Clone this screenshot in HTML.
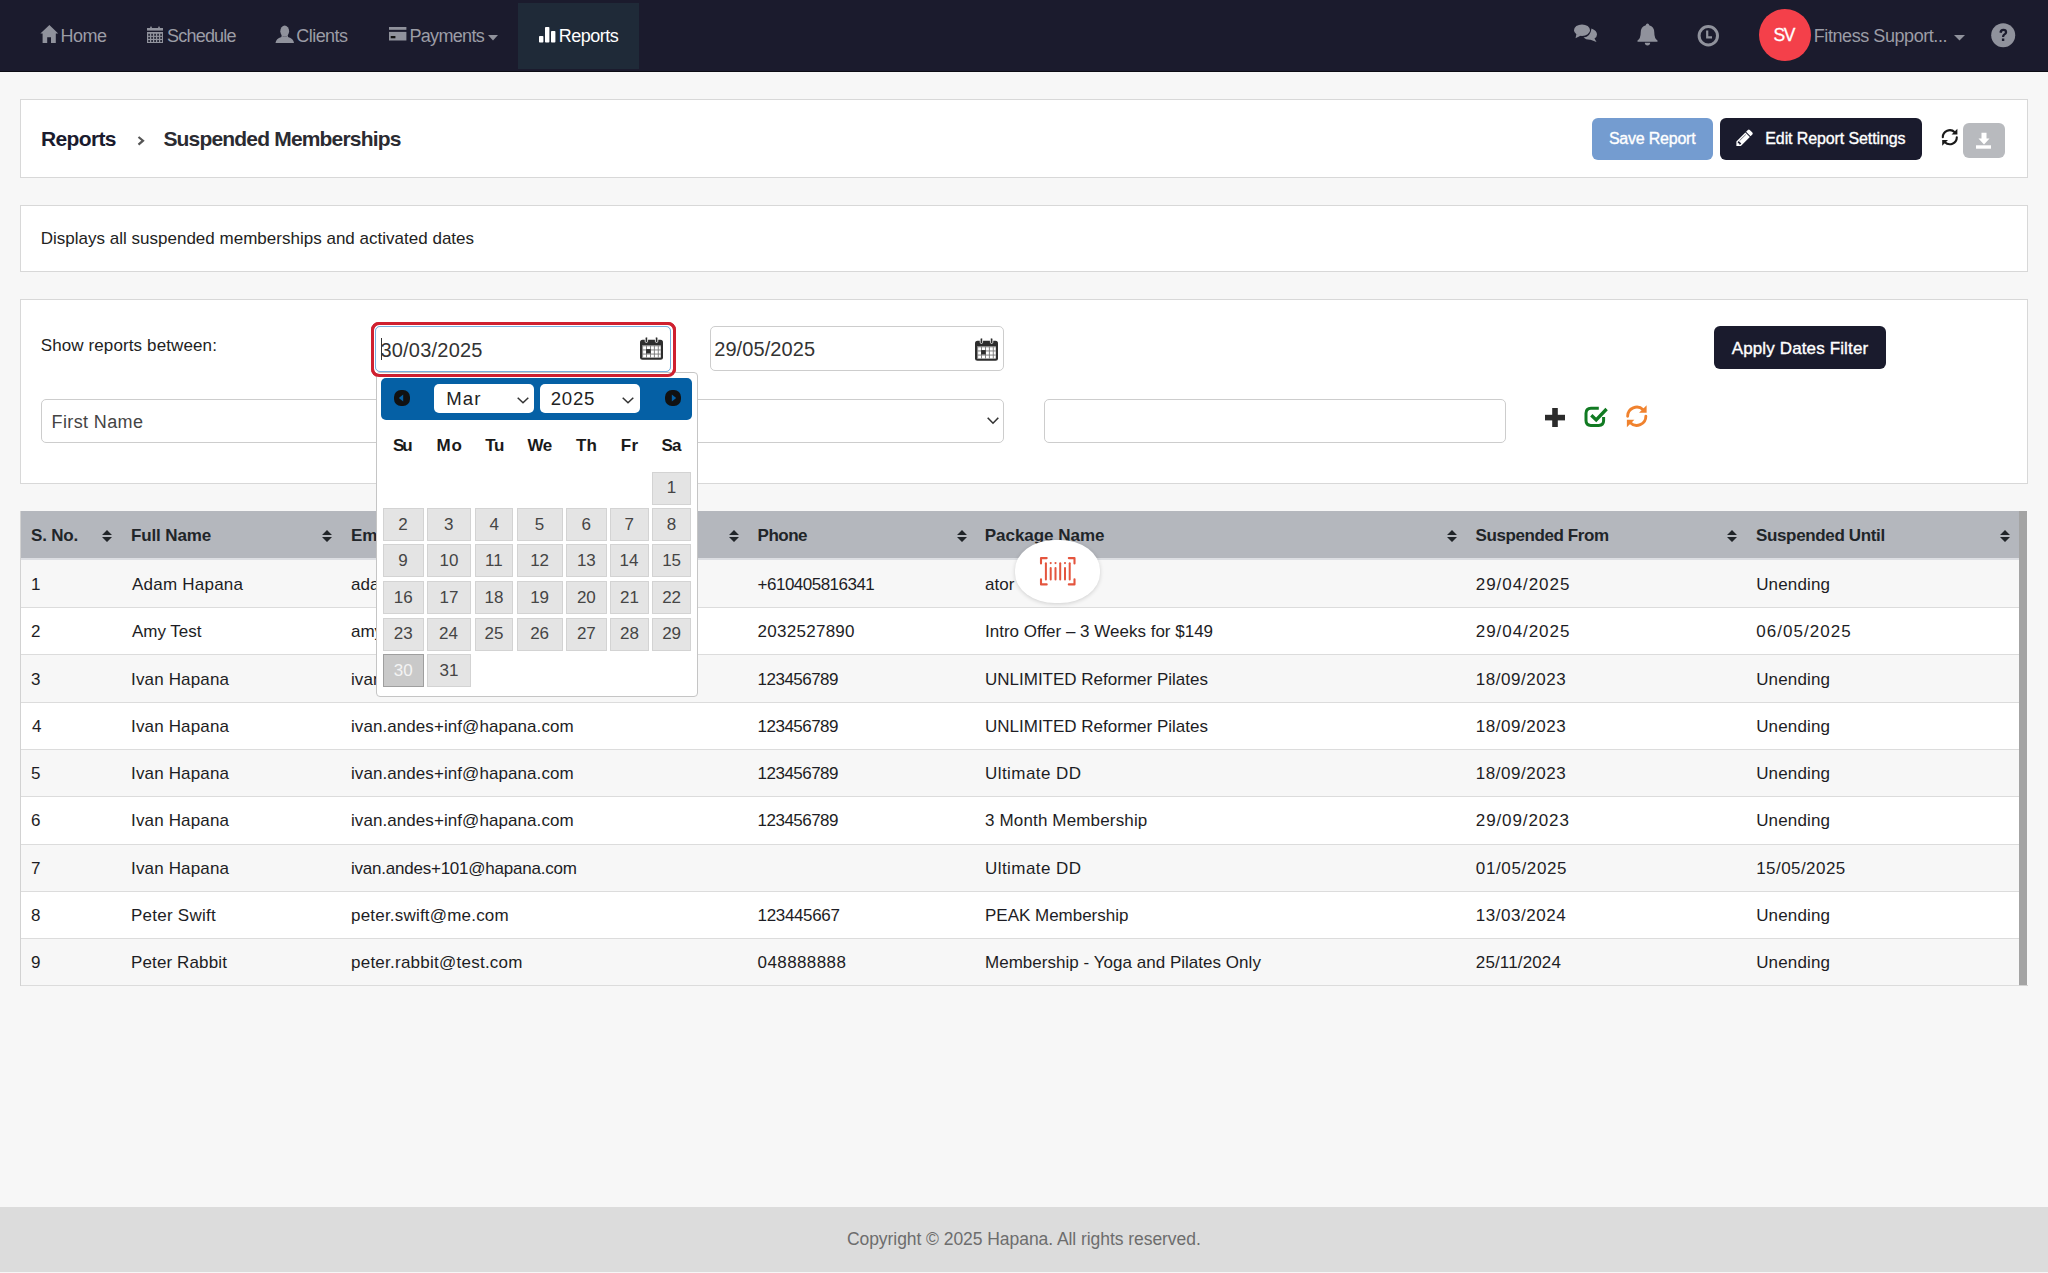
<!DOCTYPE html>
<html><head><meta charset="utf-8"><title>Suspended Memberships</title>
<style>
*{box-sizing:border-box;margin:0;padding:0}
html,body{width:2048px;height:1273px;overflow:hidden}
body{background:#f7f7f7;font-family:"Liberation Sans",sans-serif;color:#222;position:relative}
.a{position:absolute}
.t{position:absolute;white-space:nowrap;line-height:1}
svg{position:absolute;display:block;overflow:visible}
.card{position:absolute;left:20px;width:2008px;background:#fff;border:1px solid #d8d8d8}
.inp{position:absolute;background:#fff;border:1px solid #cdcdcd;border-radius:5px}
</style></head><body>
<div class="a" style="left:0;top:0;width:2048px;height:71px;background:#1b1b2d"></div><div class="a" style="left:0;top:70.8px;width:2048px;height:1.2px;background:#0c0c14"></div><div class="a" style="left:518px;top:3px;width:121px;height:66px;background:#1f2a38"></div><svg style="left:40px;top:24px" width="19" height="20" viewBox="0 0 19 20"><path d="M9.4 1 L18.2 9.4 L15.8 9.4 L15.8 19 L11 19 L11 13.2 L7.2 13.2 L7.2 19 L2.6 19 L2.6 9.4 L0.4 9.4Z" fill="#90929c"/></svg><svg style="left:146.8px;top:26px" width="16" height="17" viewBox="0 0 16 17"><rect x="0" y="2" width="16" height="2.6" fill="#90929c"/><rect x="3.2" y="0.6" width="1.6" height="2" fill="#90929c"/><rect x="11.2" y="0.6" width="1.6" height="2" fill="#90929c"/><rect x="0" y="6" width="16" height="11" fill="#90929c"/><rect x="1.2" y="7.8" width="1.8" height="2" fill="#2a2b3a"/><rect x="1.2" y="10.9" width="1.8" height="2" fill="#2a2b3a"/><rect x="1.2" y="14.0" width="1.8" height="2" fill="#2a2b3a"/><rect x="4.2" y="7.8" width="1.8" height="2" fill="#2a2b3a"/><rect x="4.2" y="10.9" width="1.8" height="2" fill="#2a2b3a"/><rect x="4.2" y="14.0" width="1.8" height="2" fill="#2a2b3a"/><rect x="7.2" y="7.8" width="1.8" height="2" fill="#2a2b3a"/><rect x="7.2" y="10.9" width="1.8" height="2" fill="#2a2b3a"/><rect x="7.2" y="14.0" width="1.8" height="2" fill="#2a2b3a"/><rect x="10.2" y="7.8" width="1.8" height="2" fill="#2a2b3a"/><rect x="10.2" y="10.9" width="1.8" height="2" fill="#2a2b3a"/><rect x="10.2" y="14.0" width="1.8" height="2" fill="#2a2b3a"/><rect x="13.2" y="7.8" width="1.8" height="2" fill="#2a2b3a"/><rect x="13.2" y="10.9" width="1.8" height="2" fill="#2a2b3a"/><rect x="13.2" y="14.0" width="1.8" height="2" fill="#2a2b3a"/></svg><svg style="left:275px;top:25px" width="19" height="19" viewBox="0 0 19 19"><ellipse cx="9.7" cy="6.2" rx="4.4" ry="5.6" fill="#90929c"/><path d="M6.6 10.5 Q9.7 13 12.8 10.5 L13 12 Q18.5 13.5 19 18 L0.5 18 Q1 13.5 6.4 12Z" fill="#90929c"/></svg><svg style="left:388.6px;top:27px" width="18" height="14" viewBox="0 0 18 14"><rect x="0" y="0" width="17.4" height="2.8" fill="#90929c"/><rect x="0" y="4.9" width="17.4" height="8.6" fill="#90929c"/><rect x="1.7" y="9" width="4.7" height="2.3" fill="#111"/></svg><svg style="left:488px;top:35px" width="10" height="6" viewBox="0 0 10 6"><path d="M0 0 L10 0 L5 5.5Z" fill="#90929c"/></svg><svg style="left:539px;top:27px" width="17" height="16" viewBox="0 0 17 16"><rect x="0" y="9" width="4.4" height="6.5" rx="0.8" fill="#fff"/><rect x="6" y="0" width="4.4" height="15.5" rx="0.8" fill="#fff"/><rect x="12" y="4" width="4.4" height="11.5" rx="0.8" fill="#fff"/></svg><svg style="left:1574px;top:24px" width="24" height="19" viewBox="0 0 24 19"><ellipse cx="8" cy="6.2" rx="8" ry="5.8" fill="#90929c"/><path d="M2.5 10 L1.5 14.2 L7 11.5Z" fill="#90929c"/><path d="M17.5 4.5 Q23 6.5 23 10.5 Q23 13 20.5 14.5 L22.5 18 L16.5 15.8 Q12 16 9.5 13.6 Q16.5 12.8 17.5 4.5Z" fill="#90929c"/></svg><svg style="left:1637px;top:23px" width="21" height="23" viewBox="0 0 21 23"><path d="M10.5 0.5 Q12 0.5 12.2 2.2 Q17.3 3.6 17.3 9.5 Q17.3 15.5 20.5 17.5 L20.5 18.8 L0.5 18.8 L0.5 17.5 Q3.7 15.5 3.7 9.5 Q3.7 3.6 8.8 2.2 Q9 0.5 10.5 0.5Z M7.8 19.8 L13.2 19.8 Q13 22.5 10.5 22.5 Q8 22.5 7.8 19.8Z" fill="#90929c"/></svg><svg style="left:1697px;top:25px" width="23" height="23" viewBox="0 0 23 23"><circle cx="11.3" cy="10.8" r="9.2" fill="none" stroke="#90929c" stroke-width="3"/><path d="M10.2 5.5 L10.2 12.4 L15 12.4" fill="none" stroke="#90929c" stroke-width="2.2"/></svg><div class="a" style="left:1759px;top:9px;width:52px;height:52px;border-radius:50%;background:#f4404a"></div><svg style="left:1953.5px;top:35px" width="11" height="6" viewBox="0 0 11 6"><path d="M0 0 L11 0 L5.5 5.5Z" fill="#90929c"/></svg><svg style="left:1990.5px;top:23px" width="25" height="25" viewBox="0 0 25 25"><circle cx="12.2" cy="12.2" r="12" fill="#90929c"/><path d="M8.4 9.6 Q8.6 5.8 12.4 5.8 Q16.2 5.8 16.2 9.2 Q16.2 11.2 14 12.3 Q13.2 12.8 13.2 14 L11 14 Q10.9 11.9 12.6 10.8 Q13.9 10 13.9 9.1 Q13.9 8 12.4 8 Q10.9 8 10.7 9.9Z M10.9 15.6 L13.3 15.6 L13.3 18 L10.9 18Z" fill="#1b1b2d"/></svg><div class="card" style="top:99px;height:79px"></div><div class="card" style="top:205px;height:67px"></div><div class="card" style="top:299px;height:185px"></div><svg style="left:136.5px;top:136px" width="8" height="10" viewBox="0 0 8 10"><path d="M1.5 1 L6 4.7 L1.5 8.6" fill="none" stroke="#555" stroke-width="2.2"/></svg><div class="a" style="left:1592px;top:118px;width:121px;height:42px;border-radius:6px;background:#749cd0"></div><div class="a" style="left:1720px;top:118px;width:202px;height:42px;border-radius:6px;background:#1a1b2d"></div><svg style="left:1735.02px;top:128.37px" width="19.35" height="19.35" viewBox="0 0 1792 1792"><path fill="#fff" stroke="#fff" stroke-width="0" d="M491 1536l91-91-235-235-91 91v107h128v128h107zm523-928q0-22-22-22-10 0-17 7l-542 542q-7 7-7 17 0 22 22 22 10 0 17-7l542-542q7-7 7-17zm-54-192l416 416-832 832h-416v-416zm683 96q0 53-37 90l-166 166-416-416 166-165q36-38 90-38 53 0 91 38l235 234q37 39 37 91z"/></svg><svg style="left:1940px;top:127.2px" width="20.00" height="20.00" viewBox="0 0 20.00 20.00"><g transform="scale(1.0)"><path d="M2.8 10.2 A7 7 0 0 1 14.75 5.25" fill="none" stroke="#1a1a1a" stroke-width="2.1" stroke-linecap="round"/><path d="M17.4 1.7 L17.4 7.5 L11.6 7.5Z" fill="#1a1a1a"/><path d="M16.8 10.2 A7 7 0 0 1 4.85 15.15" fill="none" stroke="#1a1a1a" stroke-width="2.1" stroke-linecap="round"/><path d="M2.2 18.7 L2.2 12.9 L8 12.9Z" fill="#1a1a1a"/></g></svg><div class="a" style="left:1963px;top:123px;width:42px;height:35px;border-radius:6px;background:#b8babe"></div><svg style="left:1976px;top:132px" width="16" height="17" viewBox="0 0 16 17"><path d="M5.5 0.8 L10.5 0.8 L10.5 6.5 L13.5 6.5 L8 12.5 L2.5 6.5 L5.5 6.5Z" fill="#fff"/><rect x="0" y="13.3" width="15" height="3.4" fill="#fff"/></svg><div class="a" style="left:371px;top:321.5px;width:305px;height:55.5px;border:3px solid #cf2030;border-radius:8px"></div><div class="a" style="left:375px;top:326px;width:295.5px;height:45.5px;border:1.8px solid #78afdf;border-radius:5px;background:#fff"></div><div class="inp" style="left:710px;top:326px;width:294px;height:45px"></div><svg style="left:640.3px;top:337.3px" width="23" height="23" viewBox="0 0 23 23"><rect x="0" y="2.8" width="23" height="20" rx="2.5" fill="#2d2d2d"/><rect x="2.2" y="8.4" width="18.6" height="12.2" fill="#fff"/><rect x="5.2" y="0" width="2.4" height="5.5" rx="1.2" fill="#2d2d2d" stroke="#fff" stroke-width="0.8"/><rect x="15.4" y="0" width="2.4" height="5.5" rx="1.2" fill="#2d2d2d" stroke="#fff" stroke-width="0.8"/><rect x="2.2" y="8.4" width="0.9" height="12.2" fill="#777"/><rect x="6.1" y="8.4" width="0.9" height="12.2" fill="#777"/><rect x="10.0" y="8.4" width="0.9" height="12.2" fill="#777"/><rect x="13.899999999999999" y="8.4" width="0.9" height="12.2" fill="#777"/><rect x="17.8" y="8.4" width="0.9" height="12.2" fill="#777"/><rect x="2.2" y="8.4" width="18.6" height="0.9" fill="#777"/><rect x="2.2" y="12.5" width="18.6" height="0.9" fill="#777"/><rect x="2.2" y="16.6" width="18.6" height="0.9" fill="#777"/><rect x="6.1" y="12.1" width="4.6" height="4.4" fill="#2d2d2d"/></svg><svg style="left:975px;top:337.7px" width="23" height="23" viewBox="0 0 23 23"><rect x="0" y="2.8" width="23" height="20" rx="2.5" fill="#2d2d2d"/><rect x="2.2" y="8.4" width="18.6" height="12.2" fill="#fff"/><rect x="5.2" y="0" width="2.4" height="5.5" rx="1.2" fill="#2d2d2d" stroke="#fff" stroke-width="0.8"/><rect x="15.4" y="0" width="2.4" height="5.5" rx="1.2" fill="#2d2d2d" stroke="#fff" stroke-width="0.8"/><rect x="2.2" y="8.4" width="0.9" height="12.2" fill="#777"/><rect x="6.1" y="8.4" width="0.9" height="12.2" fill="#777"/><rect x="10.0" y="8.4" width="0.9" height="12.2" fill="#777"/><rect x="13.899999999999999" y="8.4" width="0.9" height="12.2" fill="#777"/><rect x="17.8" y="8.4" width="0.9" height="12.2" fill="#777"/><rect x="2.2" y="8.4" width="18.6" height="0.9" fill="#777"/><rect x="2.2" y="12.5" width="18.6" height="0.9" fill="#777"/><rect x="2.2" y="16.6" width="18.6" height="0.9" fill="#777"/><rect x="6.1" y="12.1" width="4.6" height="4.4" fill="#2d2d2d"/></svg><div class="a" style="left:1714px;top:326px;width:172px;height:43px;border-radius:6px;background:#1a1b2d"></div><div class="inp" style="left:41px;top:398.5px;width:461.5px;height:44.5px"></div><div class="inp" style="left:542.5px;top:398.5px;width:461.5px;height:44.5px"></div><svg style="left:986.5px;top:416.5px" width="12" height="8" viewBox="0 0 12 8"><path d="M0.7 0.7 L6 6.2 L11.3 0.7" fill="none" stroke="#333" stroke-width="1.6"/></svg><div class="inp" style="left:1044px;top:398.5px;width:461.5px;height:44.5px"></div><svg style="left:1545px;top:408px" width="20" height="19" viewBox="0 0 20 19"><rect x="7.2" y="0" width="5.6" height="19" fill="#2b2b2b"/><rect x="0" y="6.8" width="20" height="5.6" fill="#2b2b2b"/></svg><svg style="left:1583px;top:405px" width="25" height="24" viewBox="0 0 25 24"><path d="M15.8 3.2 L8 3.2 Q3 3.2 3 8.2 L3 15.6 Q3 20.4 7.8 20.4 L15.8 20.4 Q20.6 20.4 20.6 15.6 L20.6 12" fill="none" stroke="#117a22" stroke-width="3"/><path d="M8.3 10.3 L13.2 15 L23.6 4" fill="none" stroke="#117a22" stroke-width="3.3"/></svg><svg style="left:1624.2px;top:402.8px" width="26.00" height="26.00" viewBox="0 0 26.00 26.00"><g transform="scale(1.3)"><path d="M2.8 10.2 A7 7 0 0 1 14.75 5.25" fill="none" stroke="#f0822e" stroke-width="2.2" stroke-linecap="round"/><path d="M17.4 1.7 L17.4 7.5 L11.6 7.5Z" fill="#f0822e"/><path d="M16.8 10.2 A7 7 0 0 1 4.85 15.15" fill="none" stroke="#f0822e" stroke-width="2.2" stroke-linecap="round"/><path d="M2.2 18.7 L2.2 12.9 L8 12.9Z" fill="#f0822e"/></g></svg><div class="a" style="left:20px;top:511px;width:1px;height:475px;background:#d2d2d2"></div><div class="a" style="left:20px;top:985px;width:2008px;height:1.3px;background:#d2d2d2"></div><div class="a" style="left:21px;top:511px;width:1998px;height:47px;background:#b4b7bd"></div><div class="a" style="left:21px;top:558px;width:1998px;height:2.3px;background:#dcdee2"></div><div class="a" style="left:21px;top:560.30px;width:1998px;height:47.33px;background:#f7f7f7"></div><div class="a" style="left:21px;top:607.63px;width:1998px;height:47.33px;background:#ffffff"></div><div class="a" style="left:21px;top:654.96px;width:1998px;height:47.33px;background:#f7f7f7"></div><div class="a" style="left:21px;top:702.29px;width:1998px;height:47.33px;background:#ffffff"></div><div class="a" style="left:21px;top:749.62px;width:1998px;height:47.33px;background:#f7f7f7"></div><div class="a" style="left:21px;top:796.95px;width:1998px;height:47.33px;background:#ffffff"></div><div class="a" style="left:21px;top:844.28px;width:1998px;height:47.33px;background:#f7f7f7"></div><div class="a" style="left:21px;top:891.61px;width:1998px;height:47.33px;background:#ffffff"></div><div class="a" style="left:21px;top:938.94px;width:1998px;height:47.33px;background:#f7f7f7"></div><div class="a" style="left:21px;top:607px;width:1998px;height:1.3px;background:#dcdcdc"></div><div class="a" style="left:21px;top:654px;width:1998px;height:1.3px;background:#dcdcdc"></div><div class="a" style="left:21px;top:702px;width:1998px;height:1.3px;background:#dcdcdc"></div><div class="a" style="left:21px;top:749px;width:1998px;height:1.3px;background:#dcdcdc"></div><div class="a" style="left:21px;top:796px;width:1998px;height:1.3px;background:#dcdcdc"></div><div class="a" style="left:21px;top:844px;width:1998px;height:1.3px;background:#dcdcdc"></div><div class="a" style="left:21px;top:891px;width:1998px;height:1.3px;background:#dcdcdc"></div><div class="a" style="left:21px;top:938px;width:1998px;height:1.3px;background:#dcdcdc"></div><div class="a" style="left:21px;top:985px;width:1998px;height:1.3px;background:#dcdcdc"></div><div class="a" style="left:2019px;top:511px;width:8px;height:474px;background:#a4a4a4"></div><svg style="left:102px;top:529.5px" width="10" height="12" viewBox="0 0 10 12"><path d="M5 0 L10 5 L0 5Z M0 7 L10 7 L5 12Z" fill="#212529"/></svg><svg style="left:322px;top:529.5px" width="10" height="12" viewBox="0 0 10 12"><path d="M5 0 L10 5 L0 5Z M0 7 L10 7 L5 12Z" fill="#212529"/></svg><svg style="left:729px;top:529.5px" width="10" height="12" viewBox="0 0 10 12"><path d="M5 0 L10 5 L0 5Z M0 7 L10 7 L5 12Z" fill="#212529"/></svg><svg style="left:957px;top:529.5px" width="10" height="12" viewBox="0 0 10 12"><path d="M5 0 L10 5 L0 5Z M0 7 L10 7 L5 12Z" fill="#212529"/></svg><svg style="left:1447px;top:529.5px" width="10" height="12" viewBox="0 0 10 12"><path d="M5 0 L10 5 L0 5Z M0 7 L10 7 L5 12Z" fill="#212529"/></svg><svg style="left:1727px;top:529.5px" width="10" height="12" viewBox="0 0 10 12"><path d="M5 0 L10 5 L0 5Z M0 7 L10 7 L5 12Z" fill="#212529"/></svg><svg style="left:2000px;top:529.5px" width="10" height="12" viewBox="0 0 10 12"><path d="M5 0 L10 5 L0 5Z M0 7 L10 7 L5 12Z" fill="#212529"/></svg><div class="a" style="left:0;top:1207px;width:2048px;height:65px;background:#dcdcdc"></div>
<span class="t" style="left:60.60px;top:26.76px;font-size:18px;color:#9c9da6;letter-spacing:-0.533px;">Home</span><span class="t" style="left:167.00px;top:26.76px;font-size:18px;color:#9c9da6;letter-spacing:-0.786px;">Schedule</span><span class="t" style="left:296.30px;top:26.76px;font-size:18px;color:#9c9da6;letter-spacing:-0.550px;">Clients</span><span class="t" style="left:409.40px;top:26.76px;font-size:18px;color:#9c9da6;letter-spacing:-0.671px;">Payments</span><span class="t" style="left:558.70px;top:26.76px;font-size:18px;color:#ffffff;letter-spacing:-0.483px;">Reports</span><span class="t" style="left:1773.50px;top:27.39px;font-size:17.5px;color:#ffffff;letter-spacing:-1.500px;-webkit-text-stroke:0.3px #fff;">SV</span><span class="t" style="left:1813.80px;top:26.76px;font-size:18px;color:#9c9da6;letter-spacing:-0.435px;">Fitness Support...</span><span class="t" style="left:41.10px;top:127.92px;font-size:21px;color:#1a1b2e;font-weight:700;letter-spacing:-0.667px;">Reports</span><span class="t" style="left:163.40px;top:127.92px;font-size:21px;color:#2b2b31;font-weight:700;letter-spacing:-0.820px;">Suspended Memberships</span><span class="t" style="left:1608.90px;top:131.06px;font-size:16px;color:#ffffff;letter-spacing:-0.220px;-webkit-text-stroke:0.35px #fff;">Save Report</span><span class="t" style="left:1765.30px;top:131.06px;font-size:16px;color:#ffffff;letter-spacing:-0.111px;-webkit-text-stroke:0.35px #fff;">Edit Report Settings</span><span class="t" style="left:40.70px;top:229.81px;font-size:17px;color:#222;letter-spacing:0.011px;">Displays all suspended memberships and activated dates</span><span class="t" style="left:40.70px;top:337.21px;font-size:17px;color:#222;letter-spacing:0.115px;">Show reports between:</span><span class="t" style="left:714.20px;top:339.47px;font-size:20px;color:#333;letter-spacing:0.089px;">29/05/2025</span><span class="t" style="left:1731.70px;top:339.61px;font-size:17px;color:#ffffff;letter-spacing:0.135px;-webkit-text-stroke:0.35px #fff;">Apply Dates Filter</span><span class="t" style="left:51.60px;top:412.56px;font-size:18px;color:#444;letter-spacing:0.378px;">First Name</span><span class="t" style="left:31.00px;top:527.31px;font-size:17px;color:#212529;font-weight:700;letter-spacing:-0.200px;">S. No.</span><span class="t" style="left:131.00px;top:527.31px;font-size:17px;color:#212529;font-weight:700;letter-spacing:-0.125px;">Full Name</span><span class="t" style="left:351.00px;top:527.31px;font-size:17px;color:#212529;font-weight:700;">Email</span><span class="t" style="left:757.60px;top:527.31px;font-size:17px;color:#212529;font-weight:700;letter-spacing:-0.500px;">Phone</span><span class="t" style="left:984.70px;top:527.31px;font-size:17px;color:#212529;font-weight:700;letter-spacing:-0.018px;">Package Name</span><span class="t" style="left:1475.60px;top:527.31px;font-size:17px;color:#212529;font-weight:700;letter-spacing:-0.415px;">Suspended From</span><span class="t" style="left:1756.00px;top:527.31px;font-size:17px;color:#212529;font-weight:700;letter-spacing:-0.357px;">Suspended Until</span><span class="t" style="left:31.00px;top:576.01px;font-size:17px;color:#1d1d24;">1</span><span class="t" style="left:132.00px;top:576.01px;font-size:17px;color:#1d1d24;letter-spacing:0.230px;">Adam Hapana</span><span class="t" style="left:351.00px;top:576.01px;font-size:17px;color:#1d1d24;">adam.hapana@hapana.com</span><span class="t" style="left:757.60px;top:576.01px;font-size:17px;color:#1d1d24;letter-spacing:-0.517px;">+610405816341</span><span class="t" style="left:985.00px;top:576.01px;font-size:17px;color:#1d1d24;">ator</span><span class="t" style="left:1475.80px;top:576.01px;font-size:17px;color:#1d1d24;letter-spacing:0.944px;">29/04/2025</span><span class="t" style="left:1756.20px;top:576.01px;font-size:17px;color:#1d1d24;letter-spacing:0.143px;">Unending</span><span class="t" style="left:31.00px;top:623.29px;font-size:17px;color:#1d1d24;">2</span><span class="t" style="left:132.00px;top:623.29px;font-size:17px;color:#1d1d24;letter-spacing:-0.029px;">Amy Test</span><span class="t" style="left:351.00px;top:623.29px;font-size:17px;color:#1d1d24;">amy.test@hapana.com</span><span class="t" style="left:757.60px;top:623.29px;font-size:17px;color:#1d1d24;letter-spacing:0.267px;">2032527890</span><span class="t" style="left:985.00px;top:623.29px;font-size:17px;color:#1d1d24;">Intro Offer – 3 Weeks for $149</span><span class="t" style="left:1475.80px;top:623.29px;font-size:17px;color:#1d1d24;letter-spacing:0.944px;">29/04/2025</span><span class="t" style="left:1756.20px;top:623.29px;font-size:17px;color:#1d1d24;letter-spacing:1.044px;">06/05/2025</span><span class="t" style="left:31.00px;top:670.57px;font-size:17px;color:#1d1d24;">3</span><span class="t" style="left:131.00px;top:670.57px;font-size:17px;color:#1d1d24;letter-spacing:0.160px;">Ivan Hapana</span><span class="t" style="left:351.00px;top:670.57px;font-size:17px;color:#1d1d24;letter-spacing:0.071px;">ivan.andes+inf@hapana.com</span><span class="t" style="left:757.60px;top:670.57px;font-size:17px;color:#1d1d24;letter-spacing:-0.525px;">123456789</span><span class="t" style="left:985.00px;top:670.57px;font-size:17px;color:#1d1d24;">UNLIMITED Reformer Pilates</span><span class="t" style="left:1475.80px;top:670.57px;font-size:17px;color:#1d1d24;letter-spacing:0.533px;">18/09/2023</span><span class="t" style="left:1756.20px;top:670.57px;font-size:17px;color:#1d1d24;letter-spacing:0.143px;">Unending</span><span class="t" style="left:32.00px;top:717.85px;font-size:17px;color:#1d1d24;">4</span><span class="t" style="left:131.00px;top:717.85px;font-size:17px;color:#1d1d24;letter-spacing:0.160px;">Ivan Hapana</span><span class="t" style="left:351.00px;top:717.85px;font-size:17px;color:#1d1d24;letter-spacing:0.071px;">ivan.andes+inf@hapana.com</span><span class="t" style="left:757.60px;top:717.85px;font-size:17px;color:#1d1d24;letter-spacing:-0.525px;">123456789</span><span class="t" style="left:985.00px;top:717.85px;font-size:17px;color:#1d1d24;">UNLIMITED Reformer Pilates</span><span class="t" style="left:1475.80px;top:717.85px;font-size:17px;color:#1d1d24;letter-spacing:0.533px;">18/09/2023</span><span class="t" style="left:1756.20px;top:717.85px;font-size:17px;color:#1d1d24;letter-spacing:0.143px;">Unending</span><span class="t" style="left:31.00px;top:765.13px;font-size:17px;color:#1d1d24;">5</span><span class="t" style="left:131.00px;top:765.13px;font-size:17px;color:#1d1d24;letter-spacing:0.160px;">Ivan Hapana</span><span class="t" style="left:351.00px;top:765.13px;font-size:17px;color:#1d1d24;letter-spacing:0.071px;">ivan.andes+inf@hapana.com</span><span class="t" style="left:757.60px;top:765.13px;font-size:17px;color:#1d1d24;letter-spacing:-0.525px;">123456789</span><span class="t" style="left:985.00px;top:765.13px;font-size:17px;color:#1d1d24;letter-spacing:0.440px;">Ultimate DD</span><span class="t" style="left:1475.80px;top:765.13px;font-size:17px;color:#1d1d24;letter-spacing:0.533px;">18/09/2023</span><span class="t" style="left:1756.20px;top:765.13px;font-size:17px;color:#1d1d24;letter-spacing:0.143px;">Unending</span><span class="t" style="left:31.00px;top:812.41px;font-size:17px;color:#1d1d24;">6</span><span class="t" style="left:131.00px;top:812.41px;font-size:17px;color:#1d1d24;letter-spacing:0.160px;">Ivan Hapana</span><span class="t" style="left:351.00px;top:812.41px;font-size:17px;color:#1d1d24;letter-spacing:0.071px;">ivan.andes+inf@hapana.com</span><span class="t" style="left:757.60px;top:812.41px;font-size:17px;color:#1d1d24;letter-spacing:-0.525px;">123456789</span><span class="t" style="left:985.00px;top:812.41px;font-size:17px;color:#1d1d24;letter-spacing:0.153px;">3 Month Membership</span><span class="t" style="left:1475.80px;top:812.41px;font-size:17px;color:#1d1d24;letter-spacing:0.889px;">29/09/2023</span><span class="t" style="left:1756.20px;top:812.41px;font-size:17px;color:#1d1d24;letter-spacing:0.143px;">Unending</span><span class="t" style="left:31.00px;top:859.69px;font-size:17px;color:#1d1d24;">7</span><span class="t" style="left:131.00px;top:859.69px;font-size:17px;color:#1d1d24;letter-spacing:0.160px;">Ivan Hapana</span><span class="t" style="left:351.00px;top:859.69px;font-size:17px;color:#1d1d24;letter-spacing:-0.229px;">ivan.andes+101@hapana.com</span><span class="t" style="left:985.00px;top:859.69px;font-size:17px;color:#1d1d24;letter-spacing:0.440px;">Ultimate DD</span><span class="t" style="left:1475.80px;top:859.69px;font-size:17px;color:#1d1d24;letter-spacing:0.633px;">01/05/2025</span><span class="t" style="left:1756.20px;top:859.69px;font-size:17px;color:#1d1d24;letter-spacing:0.444px;">15/05/2025</span><span class="t" style="left:31.00px;top:906.97px;font-size:17px;color:#1d1d24;">8</span><span class="t" style="left:131.00px;top:906.97px;font-size:17px;color:#1d1d24;letter-spacing:0.250px;">Peter Swift</span><span class="t" style="left:351.00px;top:906.97px;font-size:17px;color:#1d1d24;letter-spacing:0.200px;">peter.swift@me.com</span><span class="t" style="left:757.60px;top:906.97px;font-size:17px;color:#1d1d24;letter-spacing:-0.350px;">123445667</span><span class="t" style="left:985.00px;top:906.97px;font-size:17px;color:#1d1d24;letter-spacing:-0.014px;">PEAK Membership</span><span class="t" style="left:1475.80px;top:906.97px;font-size:17px;color:#1d1d24;letter-spacing:0.533px;">13/03/2024</span><span class="t" style="left:1756.20px;top:906.97px;font-size:17px;color:#1d1d24;letter-spacing:0.143px;">Unending</span><span class="t" style="left:31.00px;top:954.25px;font-size:17px;color:#1d1d24;">9</span><span class="t" style="left:131.00px;top:954.25px;font-size:17px;color:#1d1d24;letter-spacing:0.127px;">Peter Rabbit</span><span class="t" style="left:351.00px;top:954.25px;font-size:17px;color:#1d1d24;letter-spacing:0.245px;">peter.rabbit@test.com</span><span class="t" style="left:757.60px;top:954.25px;font-size:17px;color:#1d1d24;letter-spacing:0.400px;">048888888</span><span class="t" style="left:985.00px;top:954.25px;font-size:17px;color:#1d1d24;letter-spacing:0.027px;">Membership - Yoga and Pilates Only</span><span class="t" style="left:1475.80px;top:954.25px;font-size:17px;color:#1d1d24;letter-spacing:0.144px;">25/11/2024</span><span class="t" style="left:1756.20px;top:954.25px;font-size:17px;color:#1d1d24;letter-spacing:0.143px;">Unending</span><span class="t" style="left:846.90px;top:1231.19px;font-size:17.5px;color:#6d6d6d;letter-spacing:-0.055px;">Copyright © 2025 Hapana. All rights reserved.</span>
<div class="a" style="left:1015px;top:540px;width:85px;height:63px;border-radius:40px / 30px;background:#fff;box-shadow:0 1px 4px rgba(0,0,0,0.16)"></div><svg style="left:1036px;top:553px" width="44" height="36" viewBox="0 0 44 36"><path d="M5.0 10.5 L5.0 5.1 L10.7 5.1 M32.8 5.1 L38.5 5.1 L38.5 10.5 M5.0 26.3 L5.0 31.4 L10.7 31.4 M32.8 31.4 L38.5 31.4 L38.5 26.3" fill="none" stroke="#e4553e" stroke-width="2.1" stroke-linecap="round" stroke-linejoin="round"/><path d="M9.9 10.3 L9.9 26.4" stroke="#e4553e" stroke-width="2" stroke-linecap="round"/><path d="M24.2 10.3 L24.2 26.4" stroke="#e4553e" stroke-width="2" stroke-linecap="round"/><path d="M33.7 10.3 L33.7 26.4" stroke="#e4553e" stroke-width="2" stroke-linecap="round"/><path d="M14.7 15.1 L14.7 26.4" stroke="#e4553e" stroke-width="2" stroke-linecap="round"/><circle cx="14.7" cy="10.1" r="1.05" fill="#e4553e"/><path d="M19.5 15.1 L19.5 26.4" stroke="#e4553e" stroke-width="2" stroke-linecap="round"/><circle cx="19.5" cy="10.1" r="1.05" fill="#e4553e"/><path d="M29.0 15.1 L29.0 26.4" stroke="#e4553e" stroke-width="2" stroke-linecap="round"/><circle cx="29.0" cy="10.1" r="1.05" fill="#e4553e"/></svg>
<div class="a" style="left:375.7px;top:371.5px;width:322px;height:325px;background:#fff;border:1px solid #c5c5c5;border-radius:4px"></div>
<div class="a" style="left:371px;top:321.5px;width:305px;height:55.5px;border:3px solid #cf2030;border-radius:8px"></div>
<div class="a" style="left:375px;top:326px;width:295.5px;height:45.5px;border:1.8px solid #78afdf;border-radius:5px;background:#fff"></div>
<svg style="left:640.3px;top:337.3px" width="23" height="23" viewBox="0 0 23 23"><rect x="0" y="2.8" width="23" height="20" rx="2.5" fill="#2d2d2d"/><rect x="2.2" y="8.4" width="18.6" height="12.2" fill="#fff"/><rect x="5.2" y="0" width="2.4" height="5.5" rx="1.2" fill="#2d2d2d" stroke="#fff" stroke-width="0.8"/><rect x="15.4" y="0" width="2.4" height="5.5" rx="1.2" fill="#2d2d2d" stroke="#fff" stroke-width="0.8"/><rect x="2.2" y="8.4" width="0.9" height="12.2" fill="#777"/><rect x="6.1" y="8.4" width="0.9" height="12.2" fill="#777"/><rect x="10.0" y="8.4" width="0.9" height="12.2" fill="#777"/><rect x="13.899999999999999" y="8.4" width="0.9" height="12.2" fill="#777"/><rect x="17.8" y="8.4" width="0.9" height="12.2" fill="#777"/><rect x="2.2" y="8.4" width="18.6" height="0.9" fill="#777"/><rect x="2.2" y="12.5" width="18.6" height="0.9" fill="#777"/><rect x="2.2" y="16.6" width="18.6" height="0.9" fill="#777"/><rect x="6.1" y="12.1" width="4.6" height="4.4" fill="#2d2d2d"/></svg>
<div class="a" style="left:381.3px;top:377.8px;width:311px;height:42.4px;background:#0560a5;border-radius:5px"></div><svg style="left:393.5px;top:390px" width="16" height="16" viewBox="0 0 16 16"><rect x="0" y="0" width="16" height="16" rx="7" fill="#111"/><path d="M4.8 8 L9.2 4.5 L9.2 11.5Z" fill="#0560a5"/></svg><svg style="left:665px;top:390px" width="16" height="16" viewBox="0 0 16 16"><rect x="0" y="0" width="16" height="16" rx="7" fill="#111"/><path d="M11.2 8 L6.8 4.5 L6.8 11.5Z" fill="#0560a5"/></svg><div class="a" style="left:433.8px;top:383.9px;width:100.4px;height:29.4px;background:#fff;border-radius:5px"></div><div class="a" style="left:539.5px;top:383.9px;width:100.4px;height:29.4px;background:#fff;border-radius:5px"></div><svg style="left:517px;top:396.5px" width="12" height="7" viewBox="0 0 12 7"><path d="M0.7 0.7 L6 5.8 L11.3 0.7" fill="none" stroke="#333" stroke-width="1.5"/></svg><svg style="left:622px;top:396.5px" width="12" height="7" viewBox="0 0 12 7"><path d="M0.7 0.7 L6 5.8 L11.3 0.7" fill="none" stroke="#333" stroke-width="1.5"/></svg><div class="a" style="left:651.9px;top:471.6px;width:39.5px;height:33px;background:#e4e4e4;border:1px solid #d3d3d3"></div><div class="a" style="left:382.6px;top:507.9px;width:41.2px;height:33px;background:#e4e4e4;border:1px solid #d3d3d3"></div><div class="a" style="left:426.8px;top:507.9px;width:44.6px;height:33px;background:#e4e4e4;border:1px solid #d3d3d3"></div><div class="a" style="left:475.0px;top:507.9px;width:38.2px;height:33px;background:#e4e4e4;border:1px solid #d3d3d3"></div><div class="a" style="left:516.6px;top:507.9px;width:46.1px;height:33px;background:#e4e4e4;border:1px solid #d3d3d3"></div><div class="a" style="left:566.0px;top:507.9px;width:40.8px;height:33px;background:#e4e4e4;border:1px solid #d3d3d3"></div><div class="a" style="left:610.4px;top:507.9px;width:38.4px;height:33px;background:#e4e4e4;border:1px solid #d3d3d3"></div><div class="a" style="left:651.9px;top:507.9px;width:39.5px;height:33px;background:#e4e4e4;border:1px solid #d3d3d3"></div><div class="a" style="left:382.6px;top:544.3px;width:41.2px;height:33px;background:#e4e4e4;border:1px solid #d3d3d3"></div><div class="a" style="left:426.8px;top:544.3px;width:44.6px;height:33px;background:#e4e4e4;border:1px solid #d3d3d3"></div><div class="a" style="left:475.0px;top:544.3px;width:38.2px;height:33px;background:#e4e4e4;border:1px solid #d3d3d3"></div><div class="a" style="left:516.6px;top:544.3px;width:46.1px;height:33px;background:#e4e4e4;border:1px solid #d3d3d3"></div><div class="a" style="left:566.0px;top:544.3px;width:40.8px;height:33px;background:#e4e4e4;border:1px solid #d3d3d3"></div><div class="a" style="left:610.4px;top:544.3px;width:38.4px;height:33px;background:#e4e4e4;border:1px solid #d3d3d3"></div><div class="a" style="left:651.9px;top:544.3px;width:39.5px;height:33px;background:#e4e4e4;border:1px solid #d3d3d3"></div><div class="a" style="left:382.6px;top:580.9px;width:41.2px;height:33px;background:#e4e4e4;border:1px solid #d3d3d3"></div><div class="a" style="left:426.8px;top:580.9px;width:44.6px;height:33px;background:#e4e4e4;border:1px solid #d3d3d3"></div><div class="a" style="left:475.0px;top:580.9px;width:38.2px;height:33px;background:#e4e4e4;border:1px solid #d3d3d3"></div><div class="a" style="left:516.6px;top:580.9px;width:46.1px;height:33px;background:#e4e4e4;border:1px solid #d3d3d3"></div><div class="a" style="left:566.0px;top:580.9px;width:40.8px;height:33px;background:#e4e4e4;border:1px solid #d3d3d3"></div><div class="a" style="left:610.4px;top:580.9px;width:38.4px;height:33px;background:#e4e4e4;border:1px solid #d3d3d3"></div><div class="a" style="left:651.9px;top:580.9px;width:39.5px;height:33px;background:#e4e4e4;border:1px solid #d3d3d3"></div><div class="a" style="left:382.6px;top:617.6px;width:41.2px;height:33px;background:#e4e4e4;border:1px solid #d3d3d3"></div><div class="a" style="left:426.8px;top:617.6px;width:44.6px;height:33px;background:#e4e4e4;border:1px solid #d3d3d3"></div><div class="a" style="left:475.0px;top:617.6px;width:38.2px;height:33px;background:#e4e4e4;border:1px solid #d3d3d3"></div><div class="a" style="left:516.6px;top:617.6px;width:46.1px;height:33px;background:#e4e4e4;border:1px solid #d3d3d3"></div><div class="a" style="left:566.0px;top:617.6px;width:40.8px;height:33px;background:#e4e4e4;border:1px solid #d3d3d3"></div><div class="a" style="left:610.4px;top:617.6px;width:38.4px;height:33px;background:#e4e4e4;border:1px solid #d3d3d3"></div><div class="a" style="left:651.9px;top:617.6px;width:39.5px;height:33px;background:#e4e4e4;border:1px solid #d3d3d3"></div><div class="a" style="left:382.6px;top:654.3px;width:41.2px;height:33px;background:#c9c9c9;border:1px solid #9f9f9f"></div><div class="a" style="left:426.8px;top:654.3px;width:44.6px;height:33px;background:#e4e4e4;border:1px solid #d3d3d3"></div><span class="t" style="left:666.65px;top:479.31px;font-size:17px;color:#454545">1</span><span class="t" style="left:398.20px;top:515.61px;font-size:17px;color:#454545">2</span><span class="t" style="left:444.10px;top:515.61px;font-size:17px;color:#454545">3</span><span class="t" style="left:489.60px;top:515.61px;font-size:17px;color:#454545">4</span><span class="t" style="left:534.65px;top:515.61px;font-size:17px;color:#454545">5</span><span class="t" style="left:581.40px;top:515.61px;font-size:17px;color:#454545">6</span><span class="t" style="left:624.60px;top:515.61px;font-size:17px;color:#454545">7</span><span class="t" style="left:666.65px;top:515.61px;font-size:17px;color:#454545">8</span><span class="t" style="left:398.20px;top:552.01px;font-size:17px;color:#454545">9</span><span class="t" style="left:439.60px;top:552.01px;font-size:17px;color:#454545">10</span><span class="t" style="left:485.10px;top:552.01px;font-size:17px;color:#454545">11</span><span class="t" style="left:530.15px;top:552.01px;font-size:17px;color:#454545">12</span><span class="t" style="left:576.90px;top:552.01px;font-size:17px;color:#454545">13</span><span class="t" style="left:619.60px;top:552.01px;font-size:17px;color:#454545">14</span><span class="t" style="left:662.15px;top:552.01px;font-size:17px;color:#454545">15</span><span class="t" style="left:393.70px;top:588.61px;font-size:17px;color:#454545">16</span><span class="t" style="left:439.60px;top:588.61px;font-size:17px;color:#454545">17</span><span class="t" style="left:484.60px;top:588.61px;font-size:17px;color:#454545">18</span><span class="t" style="left:530.15px;top:588.61px;font-size:17px;color:#454545">19</span><span class="t" style="left:576.90px;top:588.61px;font-size:17px;color:#454545">20</span><span class="t" style="left:620.10px;top:588.61px;font-size:17px;color:#454545">21</span><span class="t" style="left:662.15px;top:588.61px;font-size:17px;color:#454545">22</span><span class="t" style="left:393.70px;top:625.31px;font-size:17px;color:#454545">23</span><span class="t" style="left:439.10px;top:625.31px;font-size:17px;color:#454545">24</span><span class="t" style="left:484.60px;top:625.31px;font-size:17px;color:#454545">25</span><span class="t" style="left:530.15px;top:625.31px;font-size:17px;color:#454545">26</span><span class="t" style="left:576.90px;top:625.31px;font-size:17px;color:#454545">27</span><span class="t" style="left:620.10px;top:625.31px;font-size:17px;color:#454545">28</span><span class="t" style="left:662.15px;top:625.31px;font-size:17px;color:#454545">29</span><span class="t" style="left:393.70px;top:662.01px;font-size:17px;color:#f4f4f4">30</span><span class="t" style="left:439.60px;top:662.01px;font-size:17px;color:#454545">31</span>
<span class="t" style="left:380.40px;top:339.57px;font-size:20px;color:#333;letter-spacing:0.222px;">30/03/2025</span><span class="t" style="left:446.20px;top:389.96px;font-size:18.6px;color:#222;letter-spacing:1.150px;">Mar</span><span class="t" style="left:550.80px;top:389.96px;font-size:18.6px;color:#222;letter-spacing:0.733px;">2025</span><span class="t" style="left:393.00px;top:436.51px;font-size:17px;color:#1a1a1a;font-weight:700;letter-spacing:-2.000px;">Su</span><span class="t" style="left:436.60px;top:436.51px;font-size:17px;color:#1a1a1a;font-weight:700;letter-spacing:0.700px;">Mo</span><span class="t" style="left:485.20px;top:436.51px;font-size:17px;color:#1a1a1a;font-weight:700;letter-spacing:-0.200px;">Tu</span><span class="t" style="left:527.40px;top:436.51px;font-size:17px;color:#1a1a1a;font-weight:700;letter-spacing:-0.400px;">We</span><span class="t" style="left:576.00px;top:436.51px;font-size:17px;color:#1a1a1a;font-weight:700;letter-spacing:0.200px;">Th</span><span class="t" style="left:620.70px;top:436.51px;font-size:17px;color:#1a1a1a;font-weight:700;letter-spacing:0.500px;">Fr</span><span class="t" style="left:661.50px;top:436.51px;font-size:17px;color:#1a1a1a;font-weight:700;letter-spacing:-0.800px;">Sa</span>
<div class="a" style="left:380.8px;top:338px;width:1.3px;height:22px;background:#333"></div>
</body></html>
